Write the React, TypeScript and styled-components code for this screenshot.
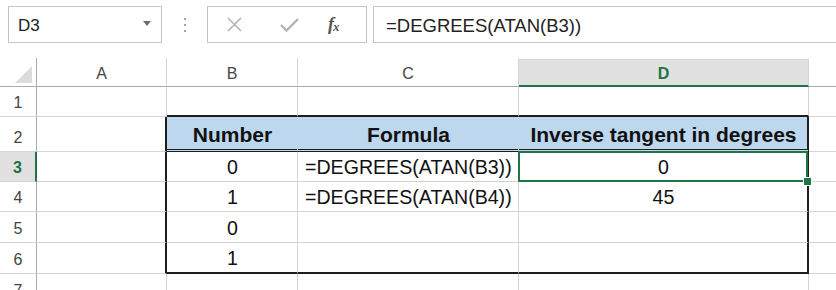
import React from 'react';
import styled, { createGlobalStyle, css } from 'styled-components';

const GlobalStyle = createGlobalStyle`
  html, body {
    margin: 0;
    padding: 0;
    background: #fff;
    overflow: hidden;
  }
  body {
    font-family: "Liberation Sans", Arial, sans-serif;
  }
`;

const GREEN = '#217346';
const GRID = '#d4d4d4';
const HEAD_BLUE = '#bdd7ee';
const LINE = '#1e1e1e';

const Page = styled.div`
  width: 836px;
  height: 290px;
  overflow: hidden;
  background: #fff;
`;

const Toolbar = styled.div`
  display: flex;
  align-items: flex-start;
  height: 58px;
  box-sizing: border-box;
  padding: 6px 0 0 8px;
`;

const NameBox = styled.div`
  width: 154px;
  height: 37px;
  box-sizing: border-box;
  border: 1px solid #c6c6c6;
  display: flex;
  align-items: center;
  justify-content: space-between;
  padding: 2px 10px 0 9px;
  font-size: 17px;
  color: #222;
`;

const DropArrow = styled.span`
  width: 0;
  height: 0;
  border-left: 4px solid transparent;
  border-right: 4px solid transparent;
  border-top: 5px solid #6d6d6d;
  margin-top: -4px;
`;

const Dots = styled.div`
  width: 45px;
  height: 37px;
  display: flex;
  flex-direction: column;
  align-items: center;
  justify-content: center;
  gap: 4px;
  padding-top: 1px;
  box-sizing: border-box;
`;

const Dot = styled.span`
  width: 2px;
  height: 2px;
  background: #a5a5a5;
`;

const FxBox = styled.div`
  width: 160px;
  height: 37px;
  box-sizing: border-box;
  border: 1px solid #c6c6c6;
  display: flex;
  align-items: center;
  padding-left: 19px;
`;

const IconSlot = styled.span<{ $gap?: number }>`
  display: flex;
  align-items: center;
  margin-left: ${p => p.$gap ?? 0}px;
`;

const FxLabel = styled.span`
  font-family: "Liberation Serif", "Times New Roman", serif;
  font-style: italic;
  font-weight: bold;
  font-size: 18px;
  color: #555;
  letter-spacing: -1px;

  sub {
    font-size: 13px;
    vertical-align: -1px;
  }
`;

const FormulaBox = styled.div`
  flex: 1;
  height: 37px;
  margin-left: 6px;
  margin-right: -4px;
  box-sizing: border-box;
  border: 1px solid #c6c6c6;
  display: flex;
  align-items: center;
  padding: 2px 0 0 12px;
  font-size: 18.5px;
  color: #222;
`;

const Sheet = styled.div`
  display: grid;
  grid-template-columns: 37px 130px 131px 221px 290px 40px;
  grid-template-rows: 29px 30px 35px 30px 30px 31px 31px 31px;
`;

const Corner = styled.div`
  box-sizing: border-box;
  border-right: 1px solid #ababab;
  border-bottom: 1px solid #ababab;
  display: flex;
  align-items: flex-end;
  justify-content: flex-end;
  padding: 0 4px 3px 0;
`;

const Triangle = styled.span`
  width: 0;
  height: 0;
  border-left: 17px solid transparent;
  border-bottom: 17px solid #dcdcdc;
`;

const ColHead = styled.div<{ $active?: boolean }>`
  box-sizing: border-box;
  display: flex;
  align-items: center;
  justify-content: center;
  padding-top: 3px;
  font-size: 16px;
  color: #444;
  border-right: 1px solid ${GRID};
  border-bottom: 1px solid #ababab;
  ${p => p.$active && css`
    margin-top: 1px;
    padding-top: 2px;
    background: #e1e1e1;
    border-top: 1px solid ${GRID};
    border-bottom: 2px solid ${GREEN};
    color: ${GREEN};
    font-weight: bold;
  `}
`;

const RowHead = styled.div<{ $active?: boolean }>`
  box-sizing: border-box;
  display: flex;
  align-items: flex-end;
  justify-content: center;
  padding-bottom: 5px;
  font-size: 16px;
  line-height: 1;
  color: #444;
  border-right: 1px solid #ababab;
  border-bottom: 1px solid ${GRID};
  ${p => p.$active && css`
    background: #e1e1e1;
    border-right: 2px solid ${GREEN};
    color: ${GREEN};
    font-weight: bold;
  `}
`;

type Edge = 'grid' | 'line' | 'double' | 'none';

const edge = (e: Edge, head?: boolean) => {
  if (e === 'line') return `2px solid ${LINE}`;
  if (e === 'double') return `3px double ${LINE}`;
  if (e === 'none') return `1px solid ${head ? HEAD_BLUE : '#fff'}`;
  return `1px solid ${GRID}`;
};

const Cell = styled.div<{
  $align?: 'left' | 'center';
  $head?: boolean;
  $bottom: Edge;
  $right: Edge;
  $active?: boolean;
}>`
  position: relative;
  box-sizing: border-box;
  display: flex;
  align-items: flex-end;
  justify-content: ${p => (p.$align === 'left' ? 'flex-start' : 'center')};
  padding: 0 6px 3px 7px;
  font-size: 19.6px;
  line-height: 1;
  color: #111;
  white-space: nowrap;
  border-right: ${p => edge(p.$right, p.$head)};
  border-bottom: ${p => edge(p.$bottom, p.$head)};
  background: ${p => (p.$head ? HEAD_BLUE : '#fff')};
  ${p => p.$head && css`
    font-weight: bold;
    font-size: 21px;
    padding-bottom: 4px;
  `}
  ${p => p.$active && css`
    &::after {
      content: '';
      position: absolute;
      top: -1px;
      left: -1px;
      right: -1px;
      bottom: -1px;
      border: 2px solid ${GREEN};
      pointer-events: none;
    }
  `}
`;

const FillHandle = styled.span`
  position: absolute;
  right: -5px;
  bottom: -5px;
  width: 7px;
  height: 7px;
  background: ${GREEN};
  border: 1px solid #fff;
  z-index: 2;
`;

const COLS = ['A', 'B', 'C', 'D', 'E'];

type CellData = { text?: string; align?: 'left' | 'center'; head?: boolean };

const rows: Record<number, Record<string, CellData>> = {
  2: {
    B: { text: 'Number', head: true },
    C: { text: 'Formula', head: true },
    D: { text: 'Inverse tangent in degrees', head: true },
  },
  3: {
    B: { text: '0' },
    C: { text: '=DEGREES(ATAN(B3))', align: 'left' },
    D: { text: '0' },
  },
  4: {
    B: { text: '1' },
    C: { text: '=DEGREES(ATAN(B4))', align: 'left' },
    D: { text: '45' },
  },
  5: { B: { text: '0' } },
  6: { B: { text: '1' } },
};

const inTableCol = (c: string) => c === 'B' || c === 'C' || c === 'D';

const rightEdge = (r: number, c: string, head?: boolean): Edge => {
  if (r >= 2 && r <= 6 && (c === 'A' || c === 'D')) return 'line';
  if (head && (c === 'B' || c === 'C')) return 'none';
  return 'grid';
};

const bottomEdge = (r: number, c: string): Edge => {
  if (!inTableCol(c)) return 'grid';
  if (r === 1 || r === 6) return 'line';
  if (r === 2) return 'double';
  return 'grid';
};

const XIcon = () => (
  <svg width="15" height="15" viewBox="0 0 15 15">
    <path d="M1 1 L14 14 M14 1 L1 14" stroke="#b3b3b3" strokeWidth="1.6" fill="none" />
  </svg>
);

const CheckIcon = () => (
  <svg width="19" height="14" viewBox="0 0 19 14">
    <path d="M1 7 L6.5 12.5 L18 1" stroke="#b3b3b3" strokeWidth="2.4" fill="none" />
  </svg>
);

const App = () => {
  return (
    <Page>
      <GlobalStyle />
      <Toolbar>
        <NameBox>
          <span>D3</span>
          <DropArrow />
        </NameBox>
        <Dots>
          <Dot />
          <Dot />
          <Dot />
        </Dots>
        <FxBox>
          <IconSlot>
            <XIcon />
          </IconSlot>
          <IconSlot $gap={38}>
            <CheckIcon />
          </IconSlot>
          <IconSlot $gap={29}>
            <FxLabel>
              f<sub>x</sub>
            </FxLabel>
          </IconSlot>
        </FxBox>
        <FormulaBox>=DEGREES(ATAN(B3))</FormulaBox>
      </Toolbar>

      <Sheet>
        <Corner>
          <Triangle />
        </Corner>
        {COLS.map(c => (
          <ColHead key={c} $active={c === 'D'}>
            {c === 'E' ? '' : c}
          </ColHead>
        ))}
        {[1, 2, 3, 4, 5, 6, 7].map(r => (
          <React.Fragment key={r}>
            <RowHead $active={r === 3}>{r}</RowHead>
            {COLS.map(c => {
              const d = rows[r]?.[c] ?? {};
              const active = r === 3 && c === 'D';
              return (
                <Cell
                  key={c}
                  $align={d.align}
                  $head={d.head}
                  $right={rightEdge(r, c, d.head)}
                  $bottom={bottomEdge(r, c)}
                  $active={active}
                >
                  {d.text}
                  {active && <FillHandle />}
                </Cell>
              );
            })}
          </React.Fragment>
        ))}
      </Sheet>
    </Page>
  );
};

export default App;
